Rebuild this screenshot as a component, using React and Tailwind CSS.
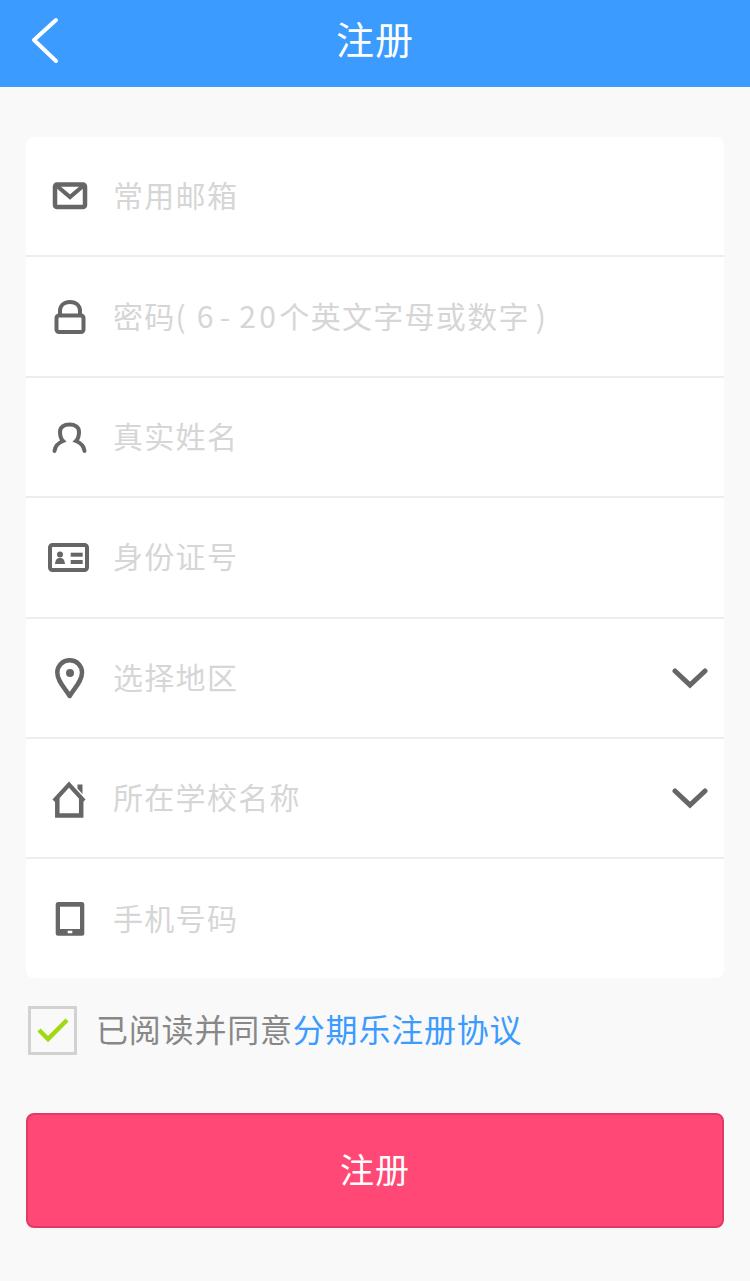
import React from "react";

const FONT = "font-['Noto_Sans_CJK_SC','Noto_Sans',sans-serif]";

// form icons, all drawn on a 44x44 box centred on the row
const MailIcon = () => (
  <svg width="44" height="44" viewBox="0 0 44 44" fill="none">
    <rect x="8" y="10.5" width="30" height="22.500" rx="2" stroke="#666" strokeWidth="4.500" />
    <path d="M10 12 L23 23 L36 12" stroke="#666" strokeWidth="4.200" />
  </svg>
);

const LockIcon = () => (
  <svg width="44" height="44" viewBox="0 0 44 44" fill="none">
    <rect x="9.500" y="20.500" width="27" height="16.500" rx="2.500" stroke="#666" strokeWidth="4" />
    <path d="M13 20 V16 C13 10.500 17 7 23 7 C29 7 33 10.500 33 16 V20" stroke="#666" strokeWidth="4" />
  </svg>
);

const UserIcon = () => (
  <svg width="44" height="44" viewBox="0 0 44 44" fill="none">
    <path
      d="M7.500 36 C8 31 11 28 16 26 C13.500 23.500 13 20.500 13 17 C13 12 17 9.500 22.500 9.500 C28 9.500 32 12 32 17 C32 20.500 31.500 23.500 29 26 C34 28 37 31 37.500 36"
      stroke="#666"
      strokeWidth="4"
      strokeLinecap="round"
    />
  </svg>
);

const IdCardIcon = () => (
  <svg width="44" height="44" viewBox="0 0 44 44" fill="none">
    <rect x="3" y="10" width="37" height="25" rx="2.500" stroke="#666" strokeWidth="4" />
    <circle cx="13" cy="19.500" r="3" fill="#666" />
    <path d="M8 29 C8.500 24.500 10 23 13 23 C16 23 17.500 24.500 18 29 Z" fill="#666" />
    <rect x="23.700" y="17.700" width="12" height="4" fill="#666" />
    <rect x="23.700" y="25" width="12" height="4" fill="#666" />
  </svg>
);

const PinIcon = () => (
  <svg width="44" height="44" viewBox="0 0 44 44" fill="none">
    <path
      d="M22.700 40 C18 32 10.300 25.500 10.300 16.500 C10.300 9.500 15.700 4.300 22.700 4.300 C29.700 4.300 35 9.500 35 16.500 C35 25.500 27.400 32 22.700 40 Z"
      stroke="#666"
      strokeWidth="4.500"
      strokeLinejoin="round"
    />
    <circle cx="23" cy="17" r="4" fill="#666" />
  </svg>
);

const HomeIcon = () => (
  <svg width="44" height="44" viewBox="0 0 44 44" fill="none">
    <path d="M10.300 22 V39.500 H34.200 V22" stroke="#666" strokeWidth="4.500" />
    <path d="M7 25 L22 8.500 L37 25" stroke="#666" strokeWidth="4.200" />
    <path d="M30.500 8.500 H35.500 V18 L30.500 12.500 Z" fill="#666" />
  </svg>
);

const TabletIcon = () => (
  <svg width="44" height="44" viewBox="0 0 44 44" fill="none">
    <rect x="8.700" y="5" width="28.600" height="33.700" rx="2.500" fill="#666" />
    <rect x="13" y="9.700" width="20" height="22.300" fill="#fff" />
    <rect x="20.700" y="33.700" width="4.600" height="2.600" fill="#fff" />
  </svg>
);

const ChevronDown = () => (
  <svg width="36" height="24" viewBox="0 0 36 24" fill="none">
    <path d="M3 5 L18 19 L33 5" stroke="#666" strokeWidth="5" strokeLinecap="round" />
  </svg>
);

const fields = [
  { icon: <MailIcon />, label: "常用邮箱" },
  {
    icon: <LockIcon />,
    // the latin glyphs sit further apart in the reference than the font spaces them
    label: (
      <>
        密码
        <span className="tracking-[11px]">(</span>
        <span className="tracking-[6.400px]">6</span>
        <span className="tracking-[9px]">-</span>
        <span className="tracking-[3.400px]">20</span>
        个英文字母或数字
        <span className="ml-[6px]">)</span>
      </>
    ),
  },
  { icon: <UserIcon />, label: "真实姓名" },
  { icon: <IdCardIcon />, label: "身份证号" },
  { icon: <PinIcon />, label: "选择地区", select: true },
  { icon: <HomeIcon />, label: "所在学校名称", select: true },
  { icon: <TabletIcon />, label: "手机号码" },
];

export default function App() {
  return (
    <div className={`${FONT} w-[750px] h-[1281px] bg-[#f9f9f9] overflow-hidden`}>
      {/* Header */}
      <header className="relative h-[87px] bg-[#3b9bff] flex items-center justify-center">
        <svg className="absolute left-[30px] top-[16px]" width="30" height="48" viewBox="0 0 30 48" fill="none">
          <path d="M26 4 L4 24 L26 45" stroke="#fff" strokeWidth="4" strokeLinecap="round" strokeLinejoin="round" />
        </svg>
        <h1 className="pb-[12px] text-[38px] leading-none text-white tracking-[1px]">注册</h1>
      </header>

      {/* Form card */}
      <div className="mt-[50px] mx-[26px] rounded-[8px] bg-white">
        {fields.map((f, i) => (
          <div
            key={i}
            className={`flex items-center pl-[21px] pr-[16px] ${
              i < fields.length - 1 ? "h-[120.4px] border-b-2 border-[#ededed]" : "h-[118.6px]"
            }`}
          >
            <div className="w-[44px] h-[44px] shrink-0">{f.icon}</div>
            <span className="ml-[22px] pb-[4px] flex-1 text-[30px] leading-none tracking-[1.3px] text-[#d6d6d6]">
              {f.label}
            </span>
            {f.select && <ChevronDown />}
          </div>
        ))}
      </div>

      {/* Agreement */}
      <div className="mt-[28px] ml-[28px] flex items-center">
        <div className="w-[49px] h-[49px] border-[3px] border-[#d2d2d2] flex items-center justify-center">
          <svg width="34" height="28" viewBox="0 0 34 28" fill="none">
            <path d="M3 14 L12 23 L31 4" stroke="#a0d911" strokeWidth="4.500" />
          </svg>
        </div>
        <p className="ml-[19px] pb-[4px] text-[32px] leading-none tracking-[0.8px] text-[#888]">
          已阅读并同意<span className="text-[#3b9bff]">分期乐注册协议</span>
        </p>
      </div>

      {/* Submit */}
      <button
        type="button"
        className="mt-[58px] mx-[26px] w-[698px] h-[115px] pb-[2px] rounded-[8px] bg-[#ff4875] border-2 border-[#e23a66] text-white text-[34px] leading-none tracking-[1px]"
      >
        注册
      </button>
    </div>
  );
}
